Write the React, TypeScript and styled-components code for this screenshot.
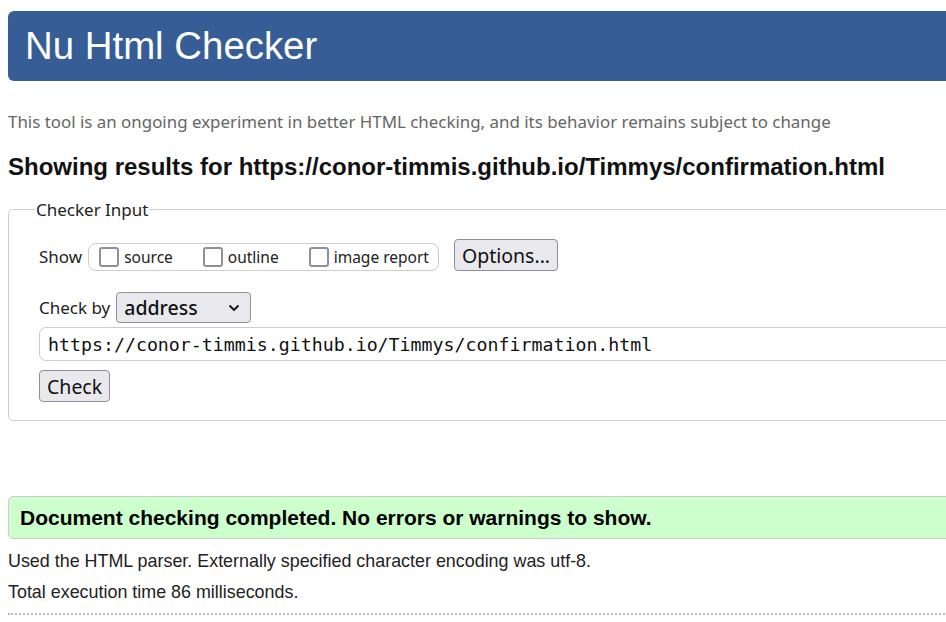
import React from "react";
import styled, { createGlobalStyle } from "styled-components";

const GlobalStyle = createGlobalStyle`
  html, body {
    margin: 0;
    padding: 0;
    background: #fff;
    overflow: hidden;
  }
  body {
    font-family: "Noto Sans", "Open Sans", sans-serif;
    color: #111;
  }
`;

const Page = styled.div`
  width: 1120px;
  padding: 11px 0 0 8px;
`;

const Header = styled.h1`
  margin: 0;
  height: 70px;
  display: flex;
  align-items: center;
  padding-left: 17px;
  background: #365d95;
  border-radius: 6px;
  color: #fff;
  font-family: "Liberation Sans", Arial, sans-serif;
  font-weight: normal;
  font-size: 38.4px;
`;

const Intro = styled.p`
  margin: 29px 0 0;
  color: #666;
  font-size: 16.9px;
  line-height: 23px;
`;

const ResultsTitle = styled.h2`
  margin: 20px 0 0;
  font-family: "Liberation Sans", Arial, sans-serif;
  font-size: 24px;
  line-height: 28px;
  color: #111;
`;

const Fieldset = styled.fieldset`
  margin: 17px 0 0;
  padding: 18px 0 18px 30px;
  border: 1px solid #ccc;
  border-radius: 5px;
`;

const Legend = styled.legend`
  margin-left: -4px;
  padding: 0 1px;
  font-size: 17px;
  color: #222;
`;

const Row = styled.div<{ $mt?: number; $align?: string }>`
  display: flex;
  align-items: ${(p) => p.$align ?? "center"};
  margin-top: ${(p) => p.$mt ?? 0}px;
`;

const Label = styled.span`
  font-size: 17px;
  line-height: 28px;
  color: #222;
  margin-right: 6px;
`;

const Pill = styled.div`
  display: flex;
  align-items: center;
  height: 28px;
  box-sizing: border-box;
  padding: 0 9px 0 10px;
  border: 1px solid #ccc;
  border-radius: 8px;
  gap: 30px;
`;

const CheckItem = styled.label`
  display: flex;
  align-items: center;
  gap: 5px;
  font-size: 15.5px;
  color: #222;
`;

const Box = styled.span`
  width: 20px;
  height: 20px;
  border: 2px solid #8f8f9d;
  border-radius: 3px;
  box-sizing: border-box;
  background: #fff;
`;

const Button = styled.button<{ $ml?: number }>`
  height: 32px;
  box-sizing: border-box;
  margin-left: ${(p) => p.$ml ?? 0}px;
  padding: 0 7px;
  border: 1px solid #8f8f9d;
  border-radius: 4px;
  background: #e9e9ed;
  font-family: "Noto Sans", "Open Sans", sans-serif;
  font-size: 19.5px;
  color: #111;
`;

const Select = styled.div`
  display: flex;
  align-items: center;
  justify-content: space-between;
  width: 135px;
  height: 31px;
  box-sizing: border-box;
  padding: 0 10px 0 7px;
  border: 1px solid #8f8f9d;
  border-radius: 4px;
  background: #e9e9ed;
  font-size: 19.5px;
  font-weight: 500;
  color: #111;
`;

const UrlInput = styled.div`
  display: flex;
  align-items: center;
  height: 32px;
  margin-top: 4px;
  padding-left: 8px;
  border: 1px solid #ccc;
  border-radius: 7px;
  font-family: "DejaVu Sans Mono", "Liberation Mono", monospace;
  font-size: 18.25px;
  color: #111;
`;

const Success = styled.div`
  margin-top: 75px;
  height: 43px;
  box-sizing: border-box;
  display: flex;
  align-items: center;
  padding-left: 11px;
  background: #ccffcc;
  border: 1px solid #ccc;
  border-radius: 5px;
  font-family: "Liberation Sans", Arial, sans-serif;
  font-weight: bold;
  font-size: 21px;
  color: #000;
`;

const Notes = styled.div`
  margin-top: 7px;
  padding-bottom: 5px;
  border-bottom: 2px dotted #bbb;
`;

const Note = styled.p`
  margin: 0;
  font-family: "Liberation Sans", Arial, sans-serif;
  font-size: 17.9px;
  line-height: 31px;
  color: #222;
`;

const Chevron = () => (
  <svg width="12" height="8" viewBox="0 0 12 8">
    <path d="M1.5 1.5 L6 6 L10.5 1.5" fill="none" stroke="#111" strokeWidth="1.8" />
  </svg>
);

const App = (): JSX.Element => {
  const url = "https://conor-timmis.github.io/Timmys/confirmation.html";
  return (
    <>
      <GlobalStyle />
      <Page>
        <Header>Nu Html Checker</Header>
        <Intro>
          This tool is an ongoing experiment in better HTML checking, and its
          behavior remains subject to change
        </Intro>
        <ResultsTitle>Showing results for {url}</ResultsTitle>
        <Fieldset>
          <Legend>Checker Input</Legend>
          <Row $align="flex-end">
            <Label>Show</Label>
            <Pill>
              <CheckItem>
                <Box />
                source
              </CheckItem>
              <CheckItem>
                <Box />
                outline
              </CheckItem>
              <CheckItem>
                <Box />
                image report
              </CheckItem>
            </Pill>
            <Button $ml={15}>Options...</Button>
          </Row>
          <Row $mt={21}>
            <Label>Check by</Label>
            <Select>
              address
              <Chevron />
            </Select>
          </Row>
          <UrlInput>{url}</UrlInput>
          <Row $mt={9}>
            <Button>Check</Button>
          </Row>
        </Fieldset>
        <Success>Document checking completed. No errors or warnings to show.</Success>
        <Notes>
          <Note>Used the HTML parser. Externally specified character encoding was utf-8.</Note>
          <Note>Total execution time 86 milliseconds.</Note>
        </Notes>
      </Page>
    </>
  );
};

export default App;
